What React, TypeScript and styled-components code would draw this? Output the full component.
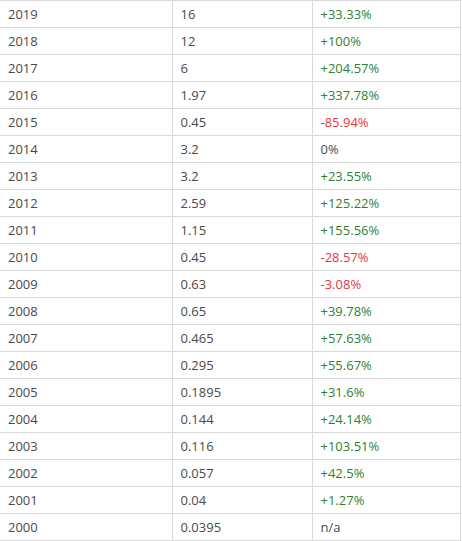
import * as React from 'react'
import styled, { createGlobalStyle } from 'styled-components'

const Global = createGlobalStyle`
  * {
    box-sizing: border-box;
  }

  html,
  body {
    margin: 0;
    padding: 0;
    background: #fff;
  }

  body {
    font-family: 'Open Sans', 'Liberation Sans', sans-serif;
    color: #4a4a4a;
  }
`

const Table = styled.table`
  width: 461px;
  border-collapse: collapse;
  table-layout: fixed;
  font-size: 13px;
`

const Row = styled.tr`
  height: 27px;
`

const Cell = styled.td<{ $w?: number; $tone?: 'up' | 'down' | 'flat' }>`
  width: ${p => (p.$w ? `${p.$w}px` : 'auto')};
  padding: 0 8px;
  border-top: 1px solid #d9d9d9;
  border-bottom: 1px solid #d9d9d9;
  border-right: 1px solid #d9d9d9;
  vertical-align: middle;
  white-space: nowrap;
  color: ${p => (p.$tone === 'up' ? '#2f7f33' : p.$tone === 'down' ? '#e8343f' : '#4a4a4a')};
`

const data: [string, string, string][] = [
  ['2019', '16', '+33.33%'],
  ['2018', '12', '+100%'],
  ['2017', '6', '+204.57%'],
  ['2016', '1.97', '+337.78%'],
  ['2015', '0.45', '-85.94%'],
  ['2014', '3.2', '0%'],
  ['2013', '3.2', '+23.55%'],
  ['2012', '2.59', '+125.22%'],
  ['2011', '1.15', '+155.56%'],
  ['2010', '0.45', '-28.57%'],
  ['2009', '0.63', '-3.08%'],
  ['2008', '0.65', '+39.78%'],
  ['2007', '0.465', '+57.63%'],
  ['2006', '0.295', '+55.67%'],
  ['2005', '0.1895', '+31.6%'],
  ['2004', '0.144', '+24.14%'],
  ['2003', '0.116', '+103.51%'],
  ['2002', '0.057', '+42.5%'],
  ['2001', '0.04', '+1.27%'],
  ['2000', '0.0395', 'n/a'],
]

const toneOf = (v: string) => (v.startsWith('+') ? 'up' : v.startsWith('-') ? 'down' : 'flat')

export default function App() {
  return (
    <>
      <Global />
      <Table>
        <tbody>
          {data.map(([year, price, change]) => (
            <Row key={year}>
              <Cell $w={172}>{year}</Cell>
              <Cell $w={140}>{price}</Cell>
              <Cell $tone={toneOf(change)}>{change}</Cell>
            </Row>
          ))}
        </tbody>
      </Table>
    </>
  )
}
